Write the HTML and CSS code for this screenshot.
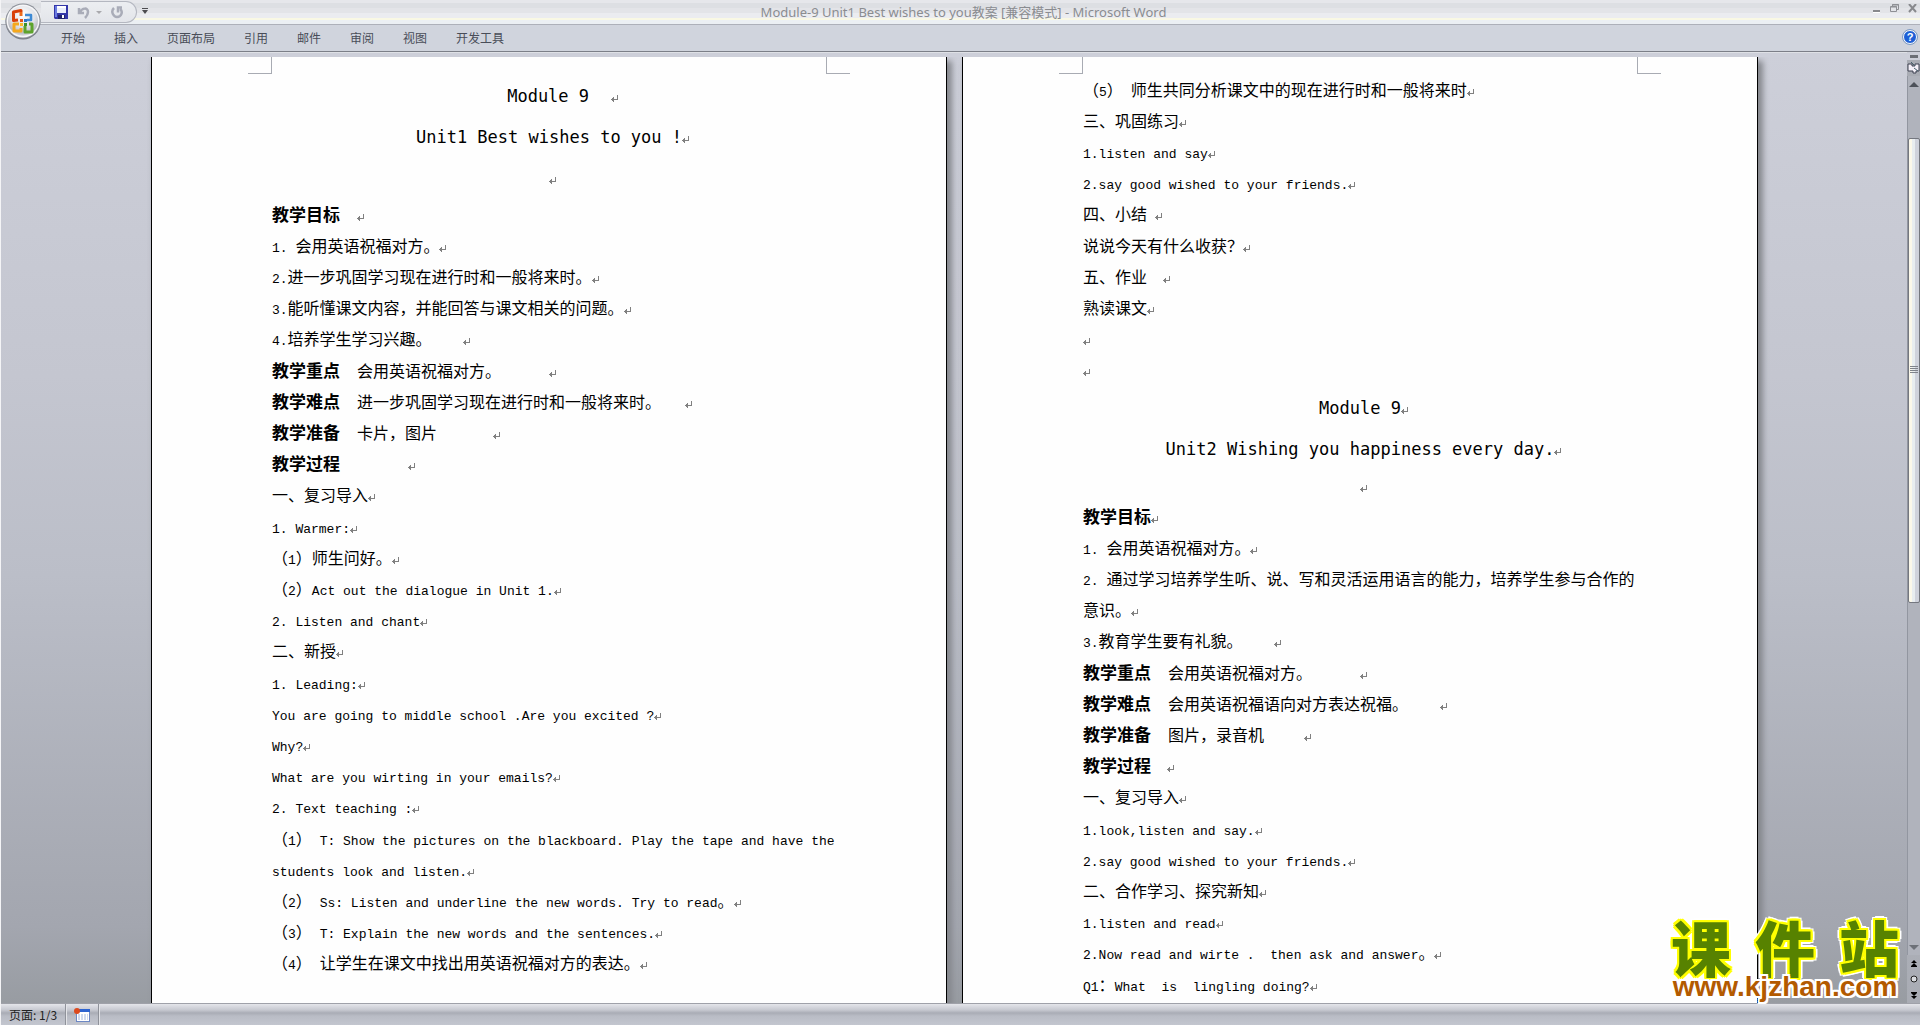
FILE: index.html
```html
<!DOCTYPE html>
<html lang="zh-CN">
<head>
<meta charset="utf-8">
<title>Module-9 Unit1 Best wishes to you教案 [兼容模式] - Microsoft Word</title>
<link rel="stylesheet" href="styles.css">
</head>
<body>
<svg class="defs" aria-hidden="true">
  <symbol id="ret" viewBox="0 0 8 8"><path d="M6 0h1v5H3v2H2V6H1V5H0V4h1V3h1V2h1v2h3z" fill="#808080"/></symbol>
</svg>

<header class="titlebar">
  <button class="office" aria-label="Office 按钮">
    <svg width="36" height="38" viewBox="0 0 36 38">
      <defs>
        <radialGradient id="orb" cx=".5" cy=".3" r=".75"><stop offset="0" stop-color="#fff"/><stop offset=".55" stop-color="#e0e1e6"/><stop offset=".8" stop-color="#b9bbc3"/><stop offset="1" stop-color="#f4f4f7"/></radialGradient>
      </defs>
      <circle cx="18" cy="20" r="17.500" fill="#777b85"/>
      <circle cx="18" cy="19" r="17.500" fill="#8c9099"/>
      <circle cx="18" cy="19" r="16.500" fill="#f6f6f8"/>
      <circle cx="18" cy="19" r="15" fill="url(#orb)"/>
      <g fill="none" stroke-width="3" stroke-linejoin="round">
        <path d="M16 10V8.500L8.500 10v8.500L13 18" stroke="#d8400a"/>
        <path d="M16 10v4" stroke="#ec6a1c"/>
        <path d="M20 13h6v5h-4" stroke="#3f8ad4" stroke-width="2.500"/>
        <path d="M14 22H9v7h7v-3" stroke="#f5a81c"/>
        <path d="M20 24v6h7v-8h-3" stroke="#5da32c"/>
      </g>
      <g><path d="M15 17h3v3h-3z" fill="#e3551a"/><path d="M19 17h3v3h-3z" fill="#2f75c8"/><path d="M15 21h3v3h-3z" fill="#f9b92a"/><path d="M19 21h3v3h-3z" fill="#3c8f2c"/></g>
    </svg>
  </button>
  <div class="qat">
    <button aria-label="保存">
      <svg width="14" height="14" viewBox="0 0 14 14"><path d="M0 0h14v14H1l-1-1z" fill="#3336a8"/><path d="M1 1h2v11H1z" fill="#6a7be0"/><path d="M3 1h9v7H3z" fill="#e9eefc"/><path d="M3 1h9v2H3z" fill="#fff"/><path d="M4 10h7v4H4z" fill="#20226e"/><path d="M8 10h2v3H8z" fill="#fff"/></svg>
    </button>
    <button aria-label="撤消">
      <svg width="13" height="13" viewBox="0 0 13 13"><path d="M2 2v5h5M3 6c2-4 8-5 8 0 0 2-1 4-3 6" fill="none" stroke="#a9acb8" stroke-width="2.500"/></svg>
      <svg width="6" height="3" viewBox="0 0 6 3"><path d="M0 0h6L3 3z" fill="#a9a9ad"/></svg>
    </button>
    <button aria-label="恢复">
      <svg width="13" height="13" viewBox="0 0 13 13"><path d="M3 2c-4 4 0 9 3 9 5 0 6-6 3-8M11 1.500H7v5" fill="none" stroke="#a9acb8" stroke-width="2.500"/></svg>
    </button>
  </div>
  <button class="qat-more" aria-label="自定义快速访问工具栏">
    <svg width="6" height="6" viewBox="0 0 6 6"><path d="M0 0h6v1H0zM0 2h6L3 6z" fill="#4c4c50"/></svg>
  </button>
  <h1>Module-9 Unit1 Best wishes to you教案 [兼容模式] - Microsoft Word</h1>
  <div class="window-buttons">
    <button aria-label="最小化"><svg width="9" height="9" viewBox="0 0 9 9"><path d="M1 6h7v2H1z" fill="#88898d"/><path d="M1 8h7v1H1z" fill="#fff"/></svg></button>
    <button aria-label="还原"><svg width="9" height="9" viewBox="0 0 9 9"><path d="M2.500 2V.5h6v5H7M.5 3v4.500h6V2.500h-6" fill="none" stroke="#8e8f94"/><path d="M2 1h7M0 3h7" stroke="#8e8f94"/></svg></button>
    <button aria-label="关闭"><svg width="9" height="9" viewBox="0 0 9 9"><path d="M1 0l7 8M8 0L1 8" stroke="#88898d" stroke-width="2"/></svg></button>
  </div>
</header>

<nav class="ribbon">
  <button>开始</button><button>插入</button><button>页面布局</button><button>引用</button><button>邮件</button><button>审阅</button><button>视图</button><button>开发工具</button>
  <button class="help" aria-label="帮助">?</button>
</nav>

<div class="workspace">
  <main class="desk">
    <article class="page">
      <div class="crops"><i></i><i></i></div>
      <div class="text first">
        <h2>  Module 9 <b></b><svg><use href="#ret"/></svg></h2>
        <h2>Unit1 Best wishes to you !<svg><use href="#ret"/></svg></h2>
        <h2><svg><use href="#ret"/></svg></h2>
        <div class="lines">
          <p><strong>教学目标　</strong><svg><use href="#ret"/></svg></p>
          <p><span>1. </span>会用英语祝福对方。<svg><use href="#ret"/></svg></p>
          <p><span>2.</span>进一步巩固学习现在进行时和一般将来时。<svg><use href="#ret"/></svg></p>
          <p><span>3.</span>能听懂课文内容，并能回答与课文相关的问题。<svg><use href="#ret"/></svg></p>
          <p><span>4.</span>培养学生学习兴趣。　　<span> </span><svg><use href="#ret"/></svg></p>
          <p><strong>教学重点　</strong>会用英语祝福对方。　　　<span> </span><svg><use href="#ret"/></svg></p>
          <p><strong>教学难点　</strong>进一步巩固学习现在进行时和一般将来时。　<span>  </span><svg><use href="#ret"/></svg></p>
          <p><strong>教学准备　</strong>卡片，图片　　　<span> </span><svg><use href="#ret"/></svg></p>
          <p><strong>教学过程　　　　</strong><svg><use href="#ret"/></svg></p>
          <p>一、复习导入<svg><use href="#ret"/></svg></p>
          <p><span>1. Warmer:</span><svg><use href="#ret"/></svg></p>
          <p>（<span>1</span>）师生问好。<svg><use href="#ret"/></svg></p>
          <p>（<span>2</span>）<span>Act out the dialogue in Unit 1.</span><svg><use href="#ret"/></svg></p>
          <p><span>2. Listen and chant</span><svg><use href="#ret"/></svg></p>
          <p>二、新授<svg><use href="#ret"/></svg></p>
          <p><span>1. Leading:</span><svg><use href="#ret"/></svg></p>
          <p><span>You are going to middle school .Are you excited ?</span><svg><use href="#ret"/></svg></p>
          <p><span>Why?</span><svg><use href="#ret"/></svg></p>
          <p><span>What are you wirting in your emails?</span><svg><use href="#ret"/></svg></p>
          <p><span>2. Text teaching :</span><svg><use href="#ret"/></svg></p>
          <p>（<span>1</span>）<span> T: Show the pictures on the blackboard. Play the tape and have the</span></p>
          <p><span>students look and listen.</span><svg><use href="#ret"/></svg></p>
          <p>（<span>2</span>）<span> Ss: Listen and underline the new words. Try to read</span>。<svg><use href="#ret"/></svg></p>
          <p>（<span>3</span>）<span> T: Explain the new words and the sentences.</span><svg><use href="#ret"/></svg></p>
          <p>（<span>4</span>）<span> </span>让学生在课文中找出用英语祝福对方的表达。<svg><use href="#ret"/></svg></p>
        </div>
      </div>
    </article>

    <article class="page">
      <div class="crops"><i></i><i></i></div>
      <div class="text">
        <div class="lines opening">
          <p>（<span>5</span>）<span> </span>师生共同分析课文中的现在进行时和一般将来时<svg><use href="#ret"/></svg></p>
          <p>三、巩固练习<svg><use href="#ret"/></svg></p>
          <p><span>1.listen and say</span><svg><use href="#ret"/></svg></p>
          <p><span>2.say good wished to your friends.</span><svg><use href="#ret"/></svg></p>
          <p>四、小结<span> </span><svg><use href="#ret"/></svg></p>
          <p>说说今天有什么收获？<svg><use href="#ret"/></svg></p>
          <p>五、作业　<svg><use href="#ret"/></svg></p>
          <p>熟读课文<svg><use href="#ret"/></svg></p>
          <p><svg><use href="#ret"/></svg></p>
          <p><svg><use href="#ret"/></svg></p>
        </div>
        <h2>Module 9<svg><use href="#ret"/></svg></h2>
        <h2>Unit2 Wishing you happiness every day.<svg><use href="#ret"/></svg></h2>
        <p class="center"><svg><use href="#ret"/></svg></p>
        <div class="lines">
          <p><strong>教学目标</strong><svg><use href="#ret"/></svg></p>
          <p><span>1. </span>会用英语祝福对方。<svg><use href="#ret"/></svg></p>
          <p><span>2. </span>通过学习培养学生听、说、写和灵活运用语言的能力，培养学生参与合作的</p>
          <p>意识。<svg><use href="#ret"/></svg></p>
          <p><span>3.</span>教育学生要有礼貌。　　<span> </span><svg><use href="#ret"/></svg></p>
          <p><strong>教学重点　</strong>会用英语祝福对方。　　　<span> </span><svg><use href="#ret"/></svg></p>
          <p><strong>教学难点　</strong>会用英语祝福语向对方表达祝福。　　<span> </span><svg><use href="#ret"/></svg></p>
          <p><strong>教学准备　</strong>图片，录音机　　<span> </span><svg><use href="#ret"/></svg></p>
          <p><strong>教学过程</strong>　<svg><use href="#ret"/></svg></p>
          <p>一、复习导入<svg><use href="#ret"/></svg></p>
          <p><span>1.look,listen and say.</span><svg><use href="#ret"/></svg></p>
          <p><span>2.say good wished to your friends.</span><svg><use href="#ret"/></svg></p>
          <p>二、合作学习、探究新知<svg><use href="#ret"/></svg></p>
          <p><span>1.listen and read</span><svg><use href="#ret"/></svg></p>
          <p><span>2.Now read and wirte .  then ask and answer</span>。<svg><use href="#ret"/></svg></p>
          <p><span>Q1</span>：<span>What  is  lingling doing?</span><svg><use href="#ret"/></svg></p>
        </div>
      </div>
    </article>
  </main>

  <aside class="scroll">
    <button class="split" aria-label="拆分"></button>
    <button class="ruler" aria-label="标尺"><svg width="13" height="12" viewBox="0 0 13 12"><path d="M1 2h4v2h3V2h4v7H9v2H6V9H1z" fill="#f4f0f8" stroke="#3d4150"/><path d="M4 0l4 4M7 6l4 3" stroke="#47606c"/></svg></button>
    <div class="track">
      <button aria-label="向上"><svg width="10" height="5" viewBox="0 0 10 5"><path d="M5 0l5 5H0z" fill="#4d5159"/></svg></button>
      <div class="rail"><div class="thumb"></div></div>
      <button aria-label="向下"><svg width="10" height="5" viewBox="0 0 10 5"><path d="M0 0h10L5 5z" fill="#6d7178"/></svg></button>
    </div>
    <button class="browse" aria-label="前一页"><svg width="6" height="7" viewBox="0 0 6 7"><path d="M3 0l3 3H0zM3 3l3 3v1H0V6z"/></svg></button>
    <button class="browse" aria-label="选择浏览对象"><svg width="8" height="8" viewBox="0 0 8 8"><circle cx="4" cy="4" r="3" fill="#d9dbdf" stroke="#222"/></svg></button>
    <button class="browse" aria-label="下一页"><svg width="6" height="7" viewBox="0 0 6 7"><path d="M3 7l3-3H0zM3 4l3-3V0H0v1z"/></svg></button>
  </aside>
</div>

<footer class="status">
  <button>页面: 1/3</button>
  <button aria-label="宏"><svg width="16" height="14" viewBox="0 0 16 14"><path d="M2 1h14v13H2z" fill="#6c87c4"/><path d="M3 4h12v9H3z" fill="#fff"/><path d="M3 1h13v3H3z" fill="#2c63d0"/><path d="M4 7h10M4 9h10M4 11h10" stroke="#9fb4dd" stroke-dasharray="2 1"/><circle cx="3" cy="3" r="3" fill="#dc4a1e"/></svg></button>
</footer>

<a class="watermark" href="http://www.kjzhan.com">
  <span class="name"><b>课</b><b>件</b><b>站</b></span>
  <span class="url">www.kjzhan.com</span>
</a>
</body>
</html>
```
FILE: styles.css
```css
* { box-sizing: border-box; }

body {
  margin: 0;
  min-height: 100vh;
  display: flex;
  flex-direction: column;
  border-left: 1px solid #f4f4f6;
  background: #cdcfd9;
  font-family: "Noto Sans CJK SC", sans-serif;
  font-size: 12px;
}

button {
  margin: 0;
  padding: 0;
  border: 0;
  background: none;
  color: inherit;
  font: inherit;
  display: flex;
  align-items: center;
  justify-content: center;
}

.defs { position: absolute; width: 0; height: 0; }

/* Title bar */
.titlebar {
  height: 25px;
  display: flex;
  align-items: flex-start;
  border-bottom: 1px solid #adb0b9;
  background: linear-gradient(#e6e7eb 3px, #dddfe3 3px 8px, #e3e4e8 8px 13px, #ebecf0 13px 18px, #f9f8e4 18px 20px, #ebeff3 20px);
}
.office { width: 36px; height: 38px; margin: 2px 0 0 4px; position: relative; z-index: 1; flex: none; }
.qat {
  width: 96px;
  height: 22px;
  margin-top: 1px;
  padding-left: 13px;
  display: flex;
  align-items: center;
  gap: 9px;
  border: 1px solid #b4b7c0;
  border-left: 0;
  border-radius: 0 11px 11px 0;
  background: linear-gradient(#eceef1, #e3e5ea);
}
.qat button { gap: 6px; }
.qat-more { height: 22px; width: 16px; }
.titlebar h1 {
  flex: 1;
  margin: 0 98px 0 0;
  text-align: center;
  font: 13px/25px "Noto Sans", "Noto Sans CJK SC", sans-serif;
  color: #8a8c90;
}
.window-buttons { display: flex; gap: 9px; padding: 4px 3px 0 0; }

/* Ribbon tabs */
.ribbon {
  height: 27px;
  padding: 0 3px 2px 60px;
  display: flex;
  align-items: center;
  gap: 29px;
  color: #494d58;
  background: #d0d4dd;
  border-bottom: 1px solid #7c7f88;
}
.help {
  width: 14px;
  height: 14px;
  margin-left: auto;
  border: 1px solid #fff;
  border-radius: 50%;
  outline: 1px solid #7f9cc4;
  background: #1d5fd6;
  color: #fff;
  font: bold 11px/12px "Liberation Sans", sans-serif;
}

/* Document area */
.workspace {
  flex: 1;
  display: flex;
  background: linear-gradient(#cdcfd9, #c4c6d0 34%, #bbbec8 55%, #a3a6af 92%, #989ca2);
}
.desk {
  flex: 1;
  display: flex;
  justify-content: center;
  gap: 15px;
  padding: 5px 0 0 1px;
  background: linear-gradient(#dfe1e6 1px, #cdcfd9 1px 5px, transparent 5px);
}
.page {
  width: 796px;
  background: #fefefe;
  border: solid #000;
  border-width: 0 1px;
  box-shadow: 4px 5px 6px 1px #85878d;
  clip-path: inset(0 -12px 0 -4px);
}
.crops { display: flex; justify-content: space-between; padding: 0 96px; }
.crops i { width: 24px; height: 17px; border: solid #a8abb3; border-width: 0 1px 1px 0; }
.crops i:last-child { border-width: 0 0 1px 1px; }

.text { padding: 0 120px; color: #000; }
.text.first { padding-top: 2px; }
.text svg { width: 8px; height: 8px; vertical-align: -1px; }
.text p, .text h2 { margin: 0; white-space: pre; }
.text p { height: 31px; font-size: 16px; line-height: 31px; }
.text p.center { padding-left: 8px; text-align: center; }
.lines p:nth-child(5n) { height: 32px; }
.opening { margin-bottom: 2px; }
.text p span { font: 13px/16px "Liberation Mono", monospace; }
.text strong { font-size: 17px; line-height: 16px; font-weight: 700; }
.text h2 {
  height: 41px;
  padding-left: 8px;
  font: 17px/41px "DejaVu Sans Mono", monospace;
  text-align: center;
}
.text h2 b { padding-left: 12px; }

/* Scroll bar */
.scroll { width: 13px; display: flex; flex-direction: column; align-items: center; background: linear-gradient(#cdcfd9, #a9acb4); }
.split { width: 8px; height: 3px; margin: 3px 0 2px; background: #6c6f76; }
.ruler { width: 13px; height: 16px; background: #a9acb4; }
.track {
  flex: 1;
  width: 13px;
  display: flex;
  flex-direction: column;
  align-items: center;
  background: #b0b3bc;
  border-left: 1px solid #9296a0;
}
.track button { height: 16px; }
.rail { flex: 1; width: 100%; padding-top: 46px; }
.thumb {
  height: 58%;
  border: 1px solid #74777f;
  border-radius: 2px;
  background:
    repeating-linear-gradient(#7f828a 0 1px, transparent 1px 2px) center / 8px 8px no-repeat,
    linear-gradient(90deg, #fbf8ea 0 3px, #e8edf0 3px 6px, #cfd2dc 6px);
}
.browse { height: 16px; }

/* Status bar */
.status {
  height: 22px;
  display: flex;
  border-top: 1px solid #9fa1a9;
  background: linear-gradient(#e4e5ea, #c6c8d0 6px, #a9acb5 9px, #b9bcc5 12px, #c3c6cf);
  color: #222;
}
.status button { padding: 0 8px; border-right: 1px solid #8f929a; box-shadow: 1px 0 #e3e4e8; }

/* Site mark laid over the document */
.watermark {
  position: absolute;
  right: 21px;
  bottom: 24px;
  width: 228px;
  display: flex;
  flex-direction: column;
  text-decoration: none;
}
.name {
  display: flex;
  justify-content: space-between;
  font-size: 60px;
  line-height: 54px;
  color: #578200;
  text-shadow: 2px 0 #ff0, -2px 0 #ff0, 0 2px #ff0, 0 -2px #ff0, 2px 2px #ff0, -2px 2px #ff0, 2px -2px #ff0, -2px -2px #ff0,
    4px 0 #fff, -4px 0 #fff, 0 4px #fff, 0 -4px #fff, 3px 3px #fff, -3px 3px #fff, 3px -3px #fff, -3px -3px #fff;
}
.name b { font-weight: 900; }
.url {
  text-align: center;
  font: bold 28px/28px "Liberation Sans", sans-serif;
  color: #b35a00;
  text-shadow: 2px 0 #fff, -2px 0 #fff, 0 2px #fff, 0 -2px #fff, 2px 2px #fff, -2px 2px #fff, 2px -2px #fff, -2px -2px #fff;
}
```
